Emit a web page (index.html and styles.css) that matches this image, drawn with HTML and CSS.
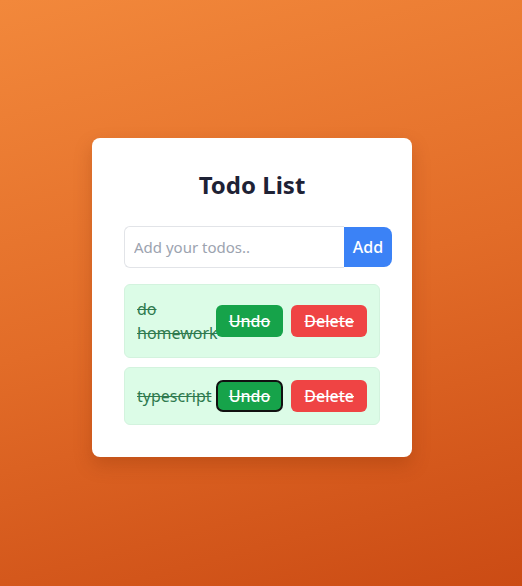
FILE: index.html
```html
<!DOCTYPE html>
<html lang="en">
<head>
<meta charset="utf-8">
<title>Todo List</title>
<link rel="stylesheet" href="styles.css">
</head>
<body>
<main class="page">
  <section class="card">
    <h1 class="title">Todo List</h1>
    <form class="add-form">
      <input class="add-input" type="text" placeholder="Add your todos..">
      <button class="add-btn" type="button">Add</button>
    </form>
    <ul class="list">
      <li class="item">
        <span class="item-text">do homework</span>
        <div class="actions">
          <button class="btn btn-undo" type="button">Undo</button>
          <button class="btn btn-delete" type="button">Delete</button>
        </div>
      </li>
      <li class="item">
        <span class="item-text">typescript</span>
        <div class="actions">
          <button class="btn btn-undo focused" type="button">Undo</button>
          <button class="btn btn-delete" type="button">Delete</button>
        </div>
      </li>
    </ul>
  </section>
</main>
</body>
</html>
```

FILE: styles.css
```css
* { box-sizing: border-box; }
html, body { margin: 0; padding: 0; height: 100%; }
body {
  font-family: "Noto Sans", "Open Sans", sans-serif;
  background: linear-gradient(165deg, #f2883b 0%, #e26c28 50%, #cb4b14 100%);
}
.page {
  min-height: 100%;
  display: flex;
  align-items: flex-start;
  justify-content: center;
  padding: 138px 18px 0 0;
}
.card {
  width: 320px;
  background: #fff;
  border-radius: 8px;
  padding: 31px 32px 32px;
  box-shadow: 0 8px 18px rgba(120, 40, 0, 0.25);
}
.title {
  margin: 0 0 25px;
  text-align: center;
  font-size: 24px;
  line-height: 32px;
  font-weight: 700;
  color: #1e2235;
}
.add-form {
  display: flex;
  width: 268px;
  height: 42px;
  margin-bottom: 16px;
}
.add-input {
  width: 220px;
  flex: 0 0 220px;
  height: 42px;
  border: 1px solid #e2e4e8;
  border-right: none;
  border-radius: 6px 0 0 6px;
  padding: 0 9px;
  font-family: inherit;
  font-size: 15px;
  color: #333;
  outline: none;
}
.add-input::placeholder { color: #9ca3af; }
.add-btn {
  width: 48px;
  flex: 0 0 48px;
  height: 40px;
  margin-top: 1px;
  border: none;
  border-radius: 0 8px 8px 0;
  background: #3b82f6;
  color: #fff;
  font-family: inherit;
  font-size: 16px;
  font-weight: 500;
  padding: 0;
}
.list {
  list-style: none;
  margin: 0;
  padding: 0;
  width: 256px;
  display: flex;
  flex-direction: column;
  gap: 9px;
}
.item {
  display: flex;
  align-items: center;
  padding: 12px 12px;
  background: #dcfce7;
  border: 1px solid #d3f3de;
  border-radius: 6px;
}
.item-text {
  flex: 1 1 auto;
  min-width: 0;
  font-size: 16px;
  line-height: 24px;
  color: #2f7a4f;
  text-decoration: line-through;
  white-space: normal;
}
.actions {
  flex: 0 0 auto;
  display: flex;
  gap: 8px;
}
.btn {
  height: 32px;
  padding: 0 11px;
  border: 2px solid transparent;
  border-radius: 6px;
  color: #fff;
  font-family: inherit;
  font-size: 16px;
  font-weight: 500;
  text-decoration: line-through;
}
.btn-undo { background: #16a34a; }
.btn-delete { background: #ef4444; }
.btn.focused { border-color: #111; border-radius: 7px; }
```
